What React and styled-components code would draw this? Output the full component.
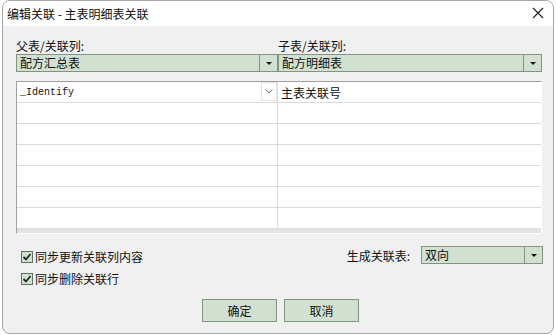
import styled, { createGlobalStyle } from "styled-components";

const GlobalStyle = createGlobalStyle`
  html, body {
    margin: 0;
    padding: 0;
    background: #ffffff;
  }
  body {
    font-family: "Noto Sans CJK SC", "Noto Sans", sans-serif;
    font-size: 12px;
    color: #111;
  }
`;

const ROWS = [
  { left: "_Identify", right: "主表关联号", editing: true },
  {}, {}, {}, {}, {}, {},
];

const App = () => {
  return (
    <>
      <GlobalStyle />
      <Window>
        <TitleBar>
          <Title>编辑关联 - 主表明细表关联</Title>
          <CloseIcon width="12" height="12" viewBox="0 0 12 12">
            <path d="M1 1 L11 11 M11 1 L1 11" stroke="#222" strokeWidth="1.1" fill="none" />
          </CloseIcon>
        </TitleBar>
        <Body>
          <PickerGrid>
            <Field>
              <Label>父表/关联列:</Label>
              <Combo>
                <ComboText>配方汇总表</ComboText>
                <ComboButton><Caret /></ComboButton>
              </Combo>
            </Field>
            <Field>
              <Label>子表/关联列:</Label>
              <Combo>
                <ComboText>配方明细表</ComboText>
                <ComboButton><Caret /></ComboButton>
              </Combo>
            </Field>
          </PickerGrid>

          <Table>
            {ROWS.map((row, i) => (
              <Row key={i}>
                <Cell>
                  {row.left && <CellText mono>{row.left}</CellText>}
                  {row.editing && (
                    <CellDrop>
                      <svg width="8" height="5" viewBox="0 0 8 5">
                        <path d="M0.5 0.5 L4 4 L7.5 0.5" stroke="#777" fill="none" strokeWidth="1" />
                      </svg>
                    </CellDrop>
                  )}
                </Cell>
                <Cell last>{row.right && <CellText>{row.right}</CellText>}</Cell>
              </Row>
            ))}
            <TableFoot />
          </Table>

          <OptionsRow>
            <Options>
              <Option>
                <CheckBox><Tick /></CheckBox>
                同步更新关联列内容
              </Option>
              <Option>
                <CheckBox><Tick /></CheckBox>
                同步删除关联行
              </Option>
            </Options>
            <GenerateField>
              <span>生成关联表:</span>
              <Combo small>
                <ComboText>双向</ComboText>
                <ComboButton><Caret /></ComboButton>
              </Combo>
            </GenerateField>
          </OptionsRow>

          <Buttons>
            <Button>确定</Button>
            <Button>取消</Button>
          </Buttons>
        </Body>
      </Window>
    </>
  );
};

const Tick = () => (
  <svg width="10" height="10" viewBox="0 0 10 10">
    <path d="M1.5 5 L4 7.5 L8.5 2" stroke="#1e2a1e" strokeWidth="1.8" fill="none" />
  </svg>
);

const Caret = () => (
  <svg width="6" height="3" viewBox="0 0 6 3">
    <path d="M0 0 H6 L3 3 Z" fill="#111" />
  </svg>
);

const Window = styled.div`
  margin-left: 2px;
  width: 552px;
  height: 334px;
  box-sizing: border-box;
  border: 1px solid #a6a6a6;
  border-radius: 8px;
  overflow: hidden;
  display: flex;
  flex-direction: column;
  background: #f0f0f0;
`;

const TitleBar = styled.div`
  height: 25px;
  background: #ffffff;
  display: flex;
  align-items: center;
  justify-content: space-between;
  padding: 0 9px 0 4px;
  flex-shrink: 0;
`;

const Title = styled.span`
  font-size: 12px;
  color: #111;
  margin-top: -1px;
`;

const CloseIcon = styled.svg`
  margin-top: -2px;
`;

const Body = styled.div`
  flex: 1;
  padding: 12px 10px 0 13px;
  display: flex;
  flex-direction: column;
`;

const PickerGrid = styled.div`
  display: grid;
  grid-template-columns: 262px 264px;
`;

const Field = styled.div`
  display: flex;
  flex-direction: column;
`;

const Label = styled.div`
  height: 15px;
  line-height: 15px;
  margin-bottom: 1px;
`;

const Combo = styled.div`
  height: 18px;
  box-sizing: border-box;
  border: 1px solid #7e957e;
  background: #d1e0d1;
  display: flex;
  width: ${({ small }) => (small ? "122px" : "auto")};
`;

const ComboText = styled.span`
  flex: 1;
  padding-left: 3px;
  line-height: 16px;
  color: #111;
`;

const ComboButton = styled.span`
  width: 17px;
  border-left: 1px solid #7e957e;
  display: flex;
  align-items: center;
  justify-content: center;
`;

const Table = styled.div`
  margin-top: 9px;
  width: 526px;
  box-sizing: border-box;
  border-top: 1px solid #a0a0a0;
  border-left: 1px solid #a0a0a0;
  border-right: 1px solid #ffffff;
  border-bottom: 1px solid #ffffff;
  display: flex;
  flex-direction: column;
`;

const Row = styled.div`
  display: grid;
  grid-template-columns: 261px 263px;
  height: 21px;
  box-sizing: border-box;
  border-bottom: 1px solid #dcdcdc;
  background: #ffffff;
`;

const Cell = styled.div`
  position: relative;
  display: flex;
  align-items: center;
  border-right: ${({ last }) => (last ? "none" : "1px solid #dcdcdc")};
  padding-left: 3px;
`;

const CellText = styled.span`
  font-family: ${({ mono }) =>
    mono ? '"Liberation Mono", "DejaVu Sans Mono", monospace' : '"Noto Sans CJK SC", sans-serif'};
  font-size: ${({ mono }) => (mono ? "10px" : "12px")};
  color: #111;
`;

const CellDrop = styled.span`
  position: absolute;
  right: 0;
  top: 0;
  width: 16px;
  height: 19px;
  box-sizing: border-box;
  border: 1px solid #e2e2e2;
  background: #fff;
  display: flex;
  align-items: center;
  justify-content: center;
`;

const TableFoot = styled.div`
  height: 4px;
  background: #e3e3e3;
`;

const OptionsRow = styled.div`
  margin-top: 12px;
  display: flex;
  justify-content: space-between;
  align-items: flex-start;
`;

const Options = styled.div`
  display: flex;
  flex-direction: column;
  gap: 7px;
  padding: 3px 0 0 5px;
`;

const Option = styled.label`
  display: flex;
  align-items: center;
  gap: 2px;
  height: 15px;
`;

const CheckBox = styled.span`
  width: 12px;
  height: 12px;
  box-sizing: border-box;
  border: 1px solid #5e705e;
  background: #d1e0d1;
  display: flex;
  align-items: center;
  justify-content: center;
`;

const GenerateField = styled.div`
  display: flex;
  align-items: center;
  gap: 11px;
`;

const Buttons = styled.div`
  margin-top: 13px;
  display: flex;
  justify-content: center;
  gap: 7px;
  padding-left: 2px;
`;

const Button = styled.button`
  width: 75px;
  height: 23px;
  border: 1px solid #7e957e;
  background: #d1e0d1;
  font-family: "Noto Sans CJK SC", sans-serif;
  font-size: 12px;
  color: #111;
  padding: 0;
`;

export default App;
